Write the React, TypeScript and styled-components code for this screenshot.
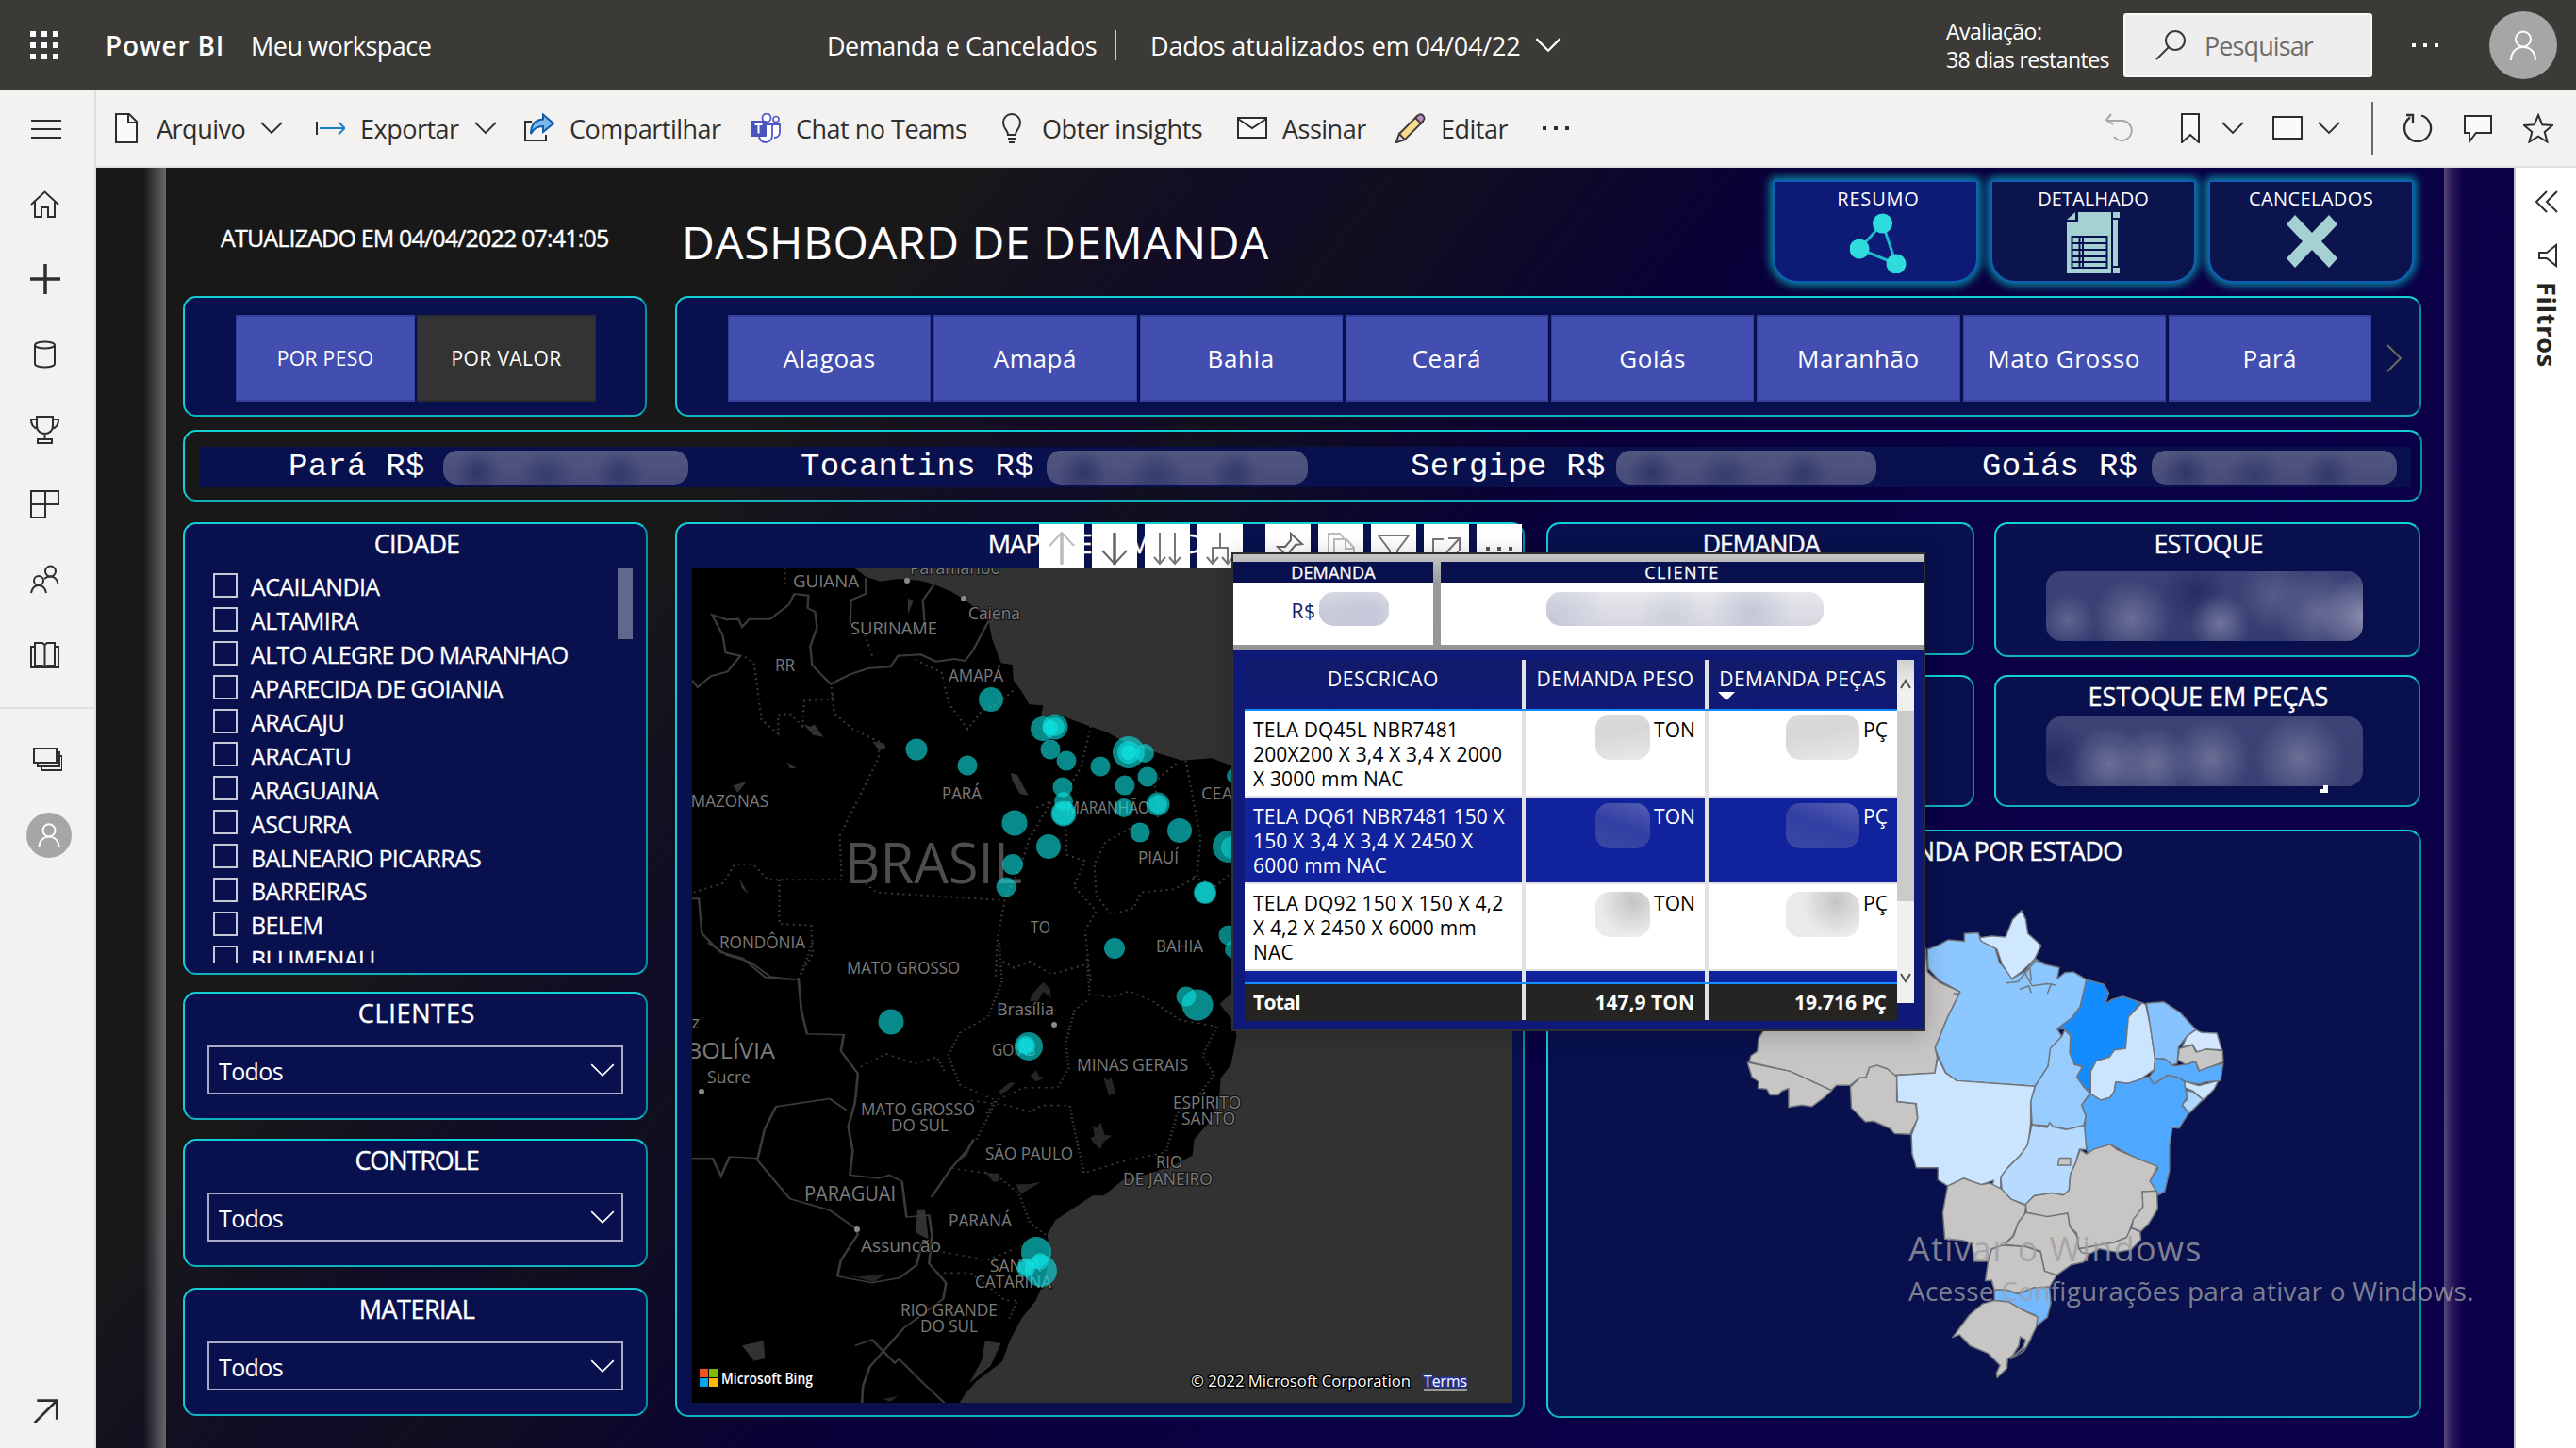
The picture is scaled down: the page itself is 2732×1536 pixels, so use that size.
import React from "react";
import styled, { createGlobalStyle, css } from "styled-components";

const Global = createGlobalStyle`
  * { box-sizing: border-box; }
  body { margin: 0; font-family: "Open Sans", "Noto Sans", sans-serif; background: #fff; }
  svg { display: block; flex: none; }
`;

const navy = "#08104e";

/* ---------- shell ---------- */
const Shell = styled.div`
  position: relative;
  width: 2732px;
  height: 1536px;
  overflow: hidden;
  display: flex;
  flex-direction: column;
`;
const TopBar = styled.header`
  height: 96px;
  flex: none;
  background: #3b3a37;
  color: #fff;
  display: flex;
  align-items: center;
  font-size: 27px;
  letter-spacing: -0.5px;
  white-space: nowrap;
`;
const Waffle = styled.div`
  width: 112px;
  padding-left: 32px;
  display: grid;
  grid-template-columns: repeat(3, 6px);
  gap: 6px;
  i { width: 6px; height: 6px; background: #fff; }
`;
const Brand = styled.div`
  width: 154px;
  font-size: 28px;
  font-weight: 600;
  letter-spacing: 0.8px;
`;
const Workspace = styled.div`width: 611px;`;
const ReportName = styled.div`width: 305px;`;
const Divider = styled.div<{ $h: number; $c: string }>`
  width: 2px;
  height: ${(p) => p.$h}px;
  background: ${(p) => p.$c};
`;
const Updated = styled.div`
  display: flex;
  align-items: center;
  gap: 15px;
  width: 880px;
  padding-left: 36px;
  letter-spacing: -0.15px;
`;
const Trial = styled.div`
  width: 188px;
  font-size: 23px;
  line-height: 30px;
  letter-spacing: -0.55px;
`;
const Search = styled.div`
  width: 264px;
  height: 68px;
  background: #eee;
  border: 2px solid #f8f8f8;
  border-radius: 3px;
  color: #6e6c6a;
  display: flex;
  align-items: center;
  padding-left: 32px;
  gap: 20px;
  letter-spacing: -0.9px;
`;
const Dots = styled.div<{ $c: string }>`
  display: flex;
  gap: 8px;
  i { width: 4px; height: 4px; background: ${(p) => p.$c}; }
`;
const TopDots = styled(Dots)`width: 124px; padding-left: 42px;`;
const Avatar = styled.div<{ $s: number }>`
  width: ${(p) => p.$s}px;
  height: ${(p) => p.$s}px;
  border-radius: 50%;
  background: #a6a6a6;
  display: grid;
  place-items: center;
`;
const Body = styled.div`flex: 1; display: flex; min-height: 0;`;
const Rail = styled.nav`
  width: 102px;
  background: #f3f2f1;
  border-right: 2px solid #e1dfdd;
  display: flex;
  flex-direction: column;
  flex: none;
`;
const RailCell = styled.div<{ $last?: boolean }>`
  height: 79.7px;
  display: flex;
  align-items: center;
  padding-left: ${(p) => (p.$last ? 28 : 32)}px;
`;
const RailGroup = styled.div`padding-top: 1px; height: 656px; border-bottom: 2px solid #e1dfdd;`;
const RailSecond = styled.div`padding-top: 14px; flex: 1;`;
const RailFoot = styled.div`padding: 0 0 25px 34px;`;
const Right = styled.div`flex: 1; display: flex; flex-direction: column; min-width: 0;`;
const ToolBar = styled.div`
  height: 82px;
  background: #f3f2f1;
  border-bottom: 2px solid #e1dfdd;
  display: flex;
  align-items: center;
  padding-left: 16px;
  color: #2f2e2c;
  flex: none;
`;
const ToolItem = styled.div<{ $w: number }>`
  width: ${(p) => p.$w}px;
  display: flex;
  align-items: center;
  gap: 16px;
  font-size: 27px;
  letter-spacing: -0.5px;
  white-space: nowrap;
  flex: none;
`;
const IconItem = styled.div<{ $w: number }>`
  width: ${(p) => p.$w}px;
  display: flex;
  align-items: center;
  gap: 16px;
  flex: none;
`;
const Stage = styled.div`flex: 1; display: flex; min-height: 0;`;
const Canvas = styled.main`
  width: 2564px;
  flex: none;
  padding-left: 74px;
  display: flex;
  background:
    linear-gradient(90deg, transparent 50px, #67676a 74px, transparent 74px, transparent 2490px, #57487a 2490px, #2a1a5c 2498px, transparent 2510px),
    linear-gradient(128deg, #181818 0%, #181818 25%, #120d24 33%, #110b28 36%, #11101e 38%, #0d082a 44%, #090038 50%, #0a0046 65%, #0b004a 100%);
`;
const Report = styled.div`
  width: 2416px;
  padding: 0 24px 0 18px;
  display: flex;
  flex-direction: column;
  color: #fff;
`;
const FilterPane = styled.aside`
  flex: 1;
  background: #fff;
  border-left: 2px solid #c8c6c4;
  display: flex;
  flex-direction: column;
  align-items: center;
  padding: 24px 0 0 2px;
`;
const FilterLabel = styled.div`
  writing-mode: vertical-rl;
  font-weight: 700;
  font-size: 27px;
  line-height: 30px;
  letter-spacing: 0.8px;
  color: #252423;
  margin-top: 15px;
`;

/* ---------- report header ---------- */
const HeaderRow = styled.div`height: 136px; display: flex; flex: none;`;
const Stamp = styled.div`
  width: 529px;
  padding: 57px 0 0 40px;
  font-size: 25px;
  line-height: 34px;
  letter-spacing: -0.83px;
  -webkit-text-stroke: 0.4px #fff;
  white-space: nowrap;
`;
const Title = styled.h1`
  margin: 0;
  padding-top: 49px;
  font-weight: 400;
  font-size: 48px;
  line-height: 60px;
  letter-spacing: 0.5px;
  flex: 1;
  white-space: nowrap;
`;
const Tabs = styled.div`display: flex; gap: 13px; padding: 13px 8px 0 0;`;
const Tab = styled.div<{ $on?: boolean }>`
  width: 218px;
  height: 109px;
  border: 2px solid #0e5fb4;
  border-radius: 3px 3px 26px 26px;
  background: ${(p) => (p.$on ? "#0d1b77" : "#0c144e")};
  box-shadow: 0 0 10px 3px #0a8ea6;
  display: flex;
  flex-direction: column;
  align-items: center;
  padding-left: ${(p) => (p.$on ? 6 : 0)}px;
`;
const TabLabel = styled.div<{ $ls: number }>`
  font-size: 20px;
  line-height: 36px;
  height: 31px;
  letter-spacing: ${(p) => p.$ls}px;
`;

/* ---------- panels ---------- */
const Panel = styled.section<{ $w: number; $h: number; $clear?: boolean }>`
  width: ${(p) => p.$w}px;
  height: ${(p) => p.$h}px;
  flex: none;
  border: 2px solid #10cfd6;
  border-right-color: #0b8f9d;
  border-bottom-color: #0fb3be;
  border-radius: 14px;
  background: ${(p) => (p.$clear ? "transparent" : navy)};
  display: flex;
  flex-direction: column;
`;
const PanelTitle = styled.h2<{ $ls?: number; $pad?: number }>`
  margin: 0;
  padding-left: ${(p) => p.$pad ?? 1}px;
  height: 39px;
  font-weight: 400;
  font-size: 27px;
  line-height: 41px;
  letter-spacing: ${(p) => p.$ls ?? 0}px;
  text-align: center;
  -webkit-text-stroke: 0.4px #fff;
  white-space: nowrap;
`;
const FilterRow = styled.div`display: flex; gap: 30px; flex: none;`;
const Segments = styled.div<{ $wide?: boolean }>`
  display: grid;
  grid-template-columns: repeat(${(p) => (p.$wide ? 8 : 2)}, 1fr);
  gap: ${(p) => (p.$wide ? 3 : 2)}px;
  width: ${(p) => (p.$wide ? 1743 : 382)}px;
  height: 92px;
  margin: 18px 0 0 54px;
`;
const Segment = styled.div<{ $fs: number; $dark?: boolean; $ls?: number }>`
  display: grid;
  place-items: center;
  font-size: ${(p) => p.$fs}px;
  letter-spacing: ${(p) => p.$ls ?? 0.4}px;
  background: ${(p) => (p.$dark ? "#333" : "#424eb0")};
  border: 2px solid ${(p) => (p.$dark ? "#2b2b2b" : "#343f9a")};
  border-width: 2px 1px;
`;
const SegmentRow = styled.div`display: flex; gap: 16px; align-items: flex-start; svg { margin-top: 49px; }`;
const Ticker = styled.div`
  margin: 16px 10px 0 16px;
  height: 43px;
  background: ${navy};
  display: flex;
  align-items: center;
  font-family: "Liberation Mono", monospace;
  font-size: 34px;
  letter-spacing: 0.25px;
  white-space: nowrap;
`;
const TickerItem = styled.div<{ $w: number; $pad: number }>`
  width: ${(p) => p.$w}px;
  padding-left: ${(p) => p.$pad}px;
  display: flex;
  align-items: center;
  justify-content: space-between;
  line-height: 45px;
`;
const Redacted = styled.span<{ $w: number; $h: number; $tone: string; $r?: number; $mt?: number }>`
  position: relative;
  display: block;
  flex: none;
  width: ${(p) => p.$w}px;
  height: ${(p) => p.$h}px;
  margin-top: ${(p) => p.$mt ?? 0}px;
  border-radius: ${(p) => p.$r ?? 15}px;
  ${(p) =>
    p.$tone === "navy" &&
    css`background:
      radial-gradient(circle at 14% 65%, rgba(46, 52, 103, 0.9), transparent 26px),
      radial-gradient(circle at 42% 75%, rgba(50, 56, 106, 0.8), transparent 30px),
      radial-gradient(circle at 72% 70%, rgba(48, 54, 105, 0.9), transparent 26px),
      linear-gradient(#525781, #454a78);`}
  ${(p) =>
    p.$tone === "light" &&
    css`background:
      radial-gradient(circle at 74% 65%, rgba(193, 196, 214, 0.9), transparent 44px),
      radial-gradient(circle at 2% 80%, rgba(193, 196, 214, 0.8), transparent 60px),
      radial-gradient(circle at 45% 75%, rgba(200, 202, 217, 0.7), transparent 36px),
      linear-gradient(#e6e7ec, #d6d7e0);`}
  ${(p) => p.$tone === "gray" && css`background: linear-gradient(170deg, #dadada, #d7d7d7 40%, #e9e9e9);`}
  ${(p) => p.$tone === "spot" && css`background: radial-gradient(circle at 68% 22%, #c4c4c4, #ebebeb 36px);`}
  ${(p) => p.$tone === "blue" && css`background: linear-gradient(20deg, #3b48a4 0%, #333fa2 50%, #545fb3 100%);`}
  ${(p) =>
    p.$tone === "kpi1" &&
    css`background:
      radial-gradient(circle at 100% 65%, #8c8fb0, transparent 44px),
      radial-gradient(circle at 7% 70%, #5e648e, transparent 30px),
      radial-gradient(circle at 27% 68%, #6a6f96, transparent 42px),
      radial-gradient(circle at 55% 75%, #6f749a, transparent 32px),
      radial-gradient(circle at 72% 35%, #565c88, transparent 40px),
      radial-gradient(circle at 86% 60%, #666b94, transparent 46px),
      radial-gradient(circle at 47% 30%, #272e65, transparent 36px),
      linear-gradient(#3c4276, #363c70);`}
  ${(p) =>
    p.$tone === "kpi2" &&
    css`background:
      radial-gradient(circle at 20% 68%, #6a6f96, transparent 40px),
      radial-gradient(circle at 34% 68%, #6a6f96, transparent 40px),
      radial-gradient(circle at 52% 60%, #6a6f96, transparent 42px),
      radial-gradient(circle at 80% 60%, #6a6f96, transparent 48px),
      radial-gradient(circle at 2% 60%, #262c62, transparent 40px),
      linear-gradient(#3d4375, #3a4073);`}
`;
const Cedilla = styled.i`
  position: absolute;
  left: 290px;
  top: 73px;
  width: 9px;
  height: 8px;
  border-right: 5px solid #fff;
  border-bottom: 4px solid #fff;
`;
const Main = styled.div`display: flex; margin-top: 22px;`;
const Col = styled.div<{ $ml?: number }>`
  display: flex;
  flex-direction: column;
  margin-left: ${(p) => p.$ml ?? 0}px;
  position: relative;
`;
const Spacer = styled.div<{ $h: number }>`height: ${(p) => p.$h}px; flex: none;`;
const KpiRow = styled.div`display: flex; gap: 21px;`;
const KpiPanel = styled(Panel)`align-items: center; padding-right: 6px;`;

/* ---------- slicers ---------- */
const ListWrap = styled.div`display: flex; height: 419px; margin: 7px 0 0 30px; overflow: hidden;`;
const List = styled.div`width: 429px; padding-top: 1px;`;
const Row = styled.div`
  height: 35.9px;
  display: flex;
  align-items: center;
  gap: 14px;
  font-size: 25px;
  line-height: 38px;
  letter-spacing: -0.65px;
  white-space: nowrap;
  -webkit-text-stroke: 0.3px #fff;
`;
const RowLabel = styled.span`padding-top: 3px;`;
const Box = styled.i`width: 26px; height: 26px; border: 2px solid #c6c8d4; flex: none;`;
const Thumb = styled.div`width: 16px; height: 76px; background: #62678d;`;
const Dropdown = styled.div`
  margin: 16px 0 0 24px;
  width: 441px;
  height: 52px;
  border: 2px solid #a9acc8;
  display: flex;
  align-items: center;
  justify-content: space-between;
  padding: 1px 7px 0 10px;
  font-size: 25px;
  letter-spacing: -0.6px;
`;

/* ---------- floating parts ---------- */
const VisualTools = styled.div`
  position: absolute;
  left: 386px;
  top: 2px;
  display: flex;
  gap: 8px;
`;
const VisualTool = styled.div<{ $gapBefore?: boolean }>`
  width: 48px;
  height: 46px;
  margin-left: ${(p) => (p.$gapBefore ? 16 : 0)}px;
  background: #fff;
  display: flex;
  align-items: center;
  justify-content: center;
  padding-top: 6px;
`;
const MapBox = styled.div`margin: 7px 0 0 16px;`;
const Tip = styled.div`
  position: absolute;
  left: 1306px;
  top: 586px;
  width: 736px;
  height: 508px;
  border: 2px solid #2f2f2f;
  background: #0f1a78;
  color: #fff;
  box-shadow: 0 4px 24px rgba(0, 0, 0, 0.22);
`;
const TipHead = styled.div`
  height: 102px;
  padding: 8px 0 6px;
  display: flex;
  gap: 8px;
  background: linear-gradient(#c6c6c6, #999 30%, #959595);
`;
const TipCard = styled.div<{ $w: number }>`width: ${(p) => p.$w}px; background: #fff;`;
const TipCardTitle = styled.div<{ $ls: number }>`
  height: 22px;
  line-height: 22px;
  background: ${navy};
  text-align: center;
  font-size: 18px;
  letter-spacing: ${(p) => p.$ls}px;
  -webkit-text-stroke: 0.3px #fff;
`;
const TipValue = styled.div<{ $pad: number }>`
  display: flex;
  justify-content: center;
  gap: 4px;
  margin-top: 10px;
  padding-left: ${(p) => p.$pad}px;
  color: #101a60;
  font-size: 21px;
  line-height: 40px;
  letter-spacing: 0.5px;
`;
const TipBody = styled.div`
  display: flex;
  padding: 10px 0 0 12px;
`;
const Table = styled.div`width: 692px; background: #e2e2e4;`;
const cols = css`display: grid; grid-template-columns: 294px 190px 200px; gap: 4px;`;
const THead = styled.div`
  ${cols}
  height: 54px;
  border-bottom: 2px solid #118dff;
  div { background: linear-gradient(#111b68, #101a76); padding-top: 7px; text-align: center; font-size: 21px; line-height: 26px; letter-spacing: 0.5px; white-space: nowrap; }
`;
const SortArrow = styled.i`
  display: block;
  margin: 1px 0 0 10px;
  width: 0;
  border: 9px solid transparent;
  border-top-color: #fff;
  border-bottom: 0;
`;
const TRow = styled.div<{ $blue?: boolean; $h: number }>`
  ${cols}
  height: ${(p) => p.$h}px;
  margin-bottom: ${(p) => (p.$h > 40 ? 2 : 0)}px;
  color: ${(p) => (p.$blue ? "#fff" : "#000")};
  > div { background: ${(p) => (p.$blue ? "#11239c" : "#fff")}; }
`;
const Desc = styled.div`
  padding: 7px 0 0 9px;
  font-size: 21px;
  line-height: 26px;
  letter-spacing: 0.15px;
  white-space: pre;
`;
const Num = styled.div`
  display: flex;
  justify-content: flex-end;
  gap: 4px;
  padding-right: 10px;
  font-size: 21px;
  line-height: 40px;
  letter-spacing: 0.1px;
`;
const TotalRow = styled.div`
  ${cols}
  height: 40px;
  border-top: 2px solid #118dff;
  font-weight: 700;
  font-size: 21px;
  line-height: 39px;
  > div { background: #252423; padding: 0 11px 0 9px; text-align: right; }
  > div:first-child { text-align: left; letter-spacing: -0.7px; }
`;
const Scroll = styled.div`
  width: 18px;
  height: 364px;
  background: linear-gradient(#d0d0d0, #f0f0f0 30px);
  display: flex;
  flex-direction: column;
  align-items: center;
`;
const ScrollArrow = styled.div<{ $h: number; $pt: number }>`
  height: ${(p) => p.$h}px;
  padding-top: ${(p) => p.$pt}px;
`;
const ScrollThumb = styled.div`width: 18px; height: 202px; background: #cbcbcb;`;
const Watermark = styled.div`
  position: absolute;
  left: 2024px;
  top: 1300px;
  color: rgba(158, 158, 162, 0.8);
  white-space: nowrap;
  font-size: 28px;
  line-height: 38px;
  letter-spacing: 0.25px;
`;
const WatermarkTitle = styled.div`font-size: 36px; line-height: 50px; letter-spacing: 1.3px;`;

/* ---------- icons ---------- */
type IconProps = { w?: number; h?: number; vb?: string; c?: string; sw?: number; children: React.ReactNode };
const Icon = ({ w = 32, h = 32, vb = "0 0 32 32", c = "#2f2e2c", sw = 2, children }: IconProps) => (
  <svg width={w} height={h} viewBox={vb} fill="none" stroke={c} strokeWidth={sw}>
    {children}
  </svg>
);
const Chevron = ({ w = 24, c = "#2f2e2c", sw = 1.8 }: { w?: number; c?: string; sw?: number }) => (
  <Icon w={w} h={w / 2 + 2} vb="0 0 24 14" c={c} sw={sw}><path d="M1 1l11 11L23 1" /></Icon>
);
const Person = ({ s, sw = 2 }: { s: number; sw?: number }) => (
  <Icon w={s} h={s} c="#fff" sw={sw}><circle cx="16" cy="9.5" r="8" /><path d="M3 32c0-8 5-14 13-14s13 6 13 14" /></Icon>
);

const railIcons = [
  <Icon key="menu" w={34} vb="1 0 34 32"><path d="M2 7h32M2 16h32M2 25h32" /></Icon>,
  <Icon key="home"><path d="M1 16L15.5 2.5 30 16M5 13v16h7V19h7v10h7V13" /></Icon>,
  <Icon key="plus" sw={3.5}><path d="M16 0v32M0 16h32" /></Icon>,
  <Icon key="data"><path d="M5 6v20c0 2 5 3.5 10.5 3.5S26 28 26 26V6" /><ellipse cx="15.5" cy="6" rx="10.5" ry="3.5" /></Icon>,
  <Icon key="cup"><path d="M7 2h17v10c0 5-4 8-8.5 8S7 17 7 12zM7 5H1c0 6 2 9 7 9.5M24 5h6c0 6-2 9-7 9.5M15.5 20v5M8 30v-4h15v4z" /></Icon>,
  <Icon key="apps"><path d="M1 2h29v14H1zM1 16v14h15V2" /></Icon>,
  <Icon key="people"><circle cx="21.5" cy="7" r="5.5" /><circle cx="9" cy="17" r="5" /><path d="M1 30c1-5 4-8 8-8s7 3 8 8M15 15c2-2 4-2.5 6.5-2.5 4 0 7 3 8 8" /></Icon>,
  <Icon key="book"><path d="M5 3h8l2.5 2L18 3h8v24H18l-2.5 1.5L13 27H5zM15.5 5v23M5 7H1v22h29V7h-4" /></Icon>,
];

const FileIcon = () => <Icon><path fill="#fafafa" d="M5 1h14l8 8v22H5zM18 1v9h9" /></Icon>;
const ExportIcon = () => <Icon><path d="M2 9v14" /><path stroke="#1a7fc4" d="M5 16h26M25 9.5L31.5 16 25 22.5" /></Icon>;
const ShareIcon = () => (
  <Icon><path d="M8 9H1v20h22v-6" /><path fill="#7db8ea" stroke="#0f5fa8" d="M20 1.5L31 11 20 20v-6c-6 0-10 2-13 8 0-10 5-15 13-15.5z" /></Icon>
);
const TeamsIcon = () => (
  <svg width="32" height="32" viewBox="0 0 32 32">
    <circle cx="17" cy="5" r="4.500" fill="#fff" stroke="#5059c9" strokeWidth="1.800" />
    <circle cx="27" cy="6.500" r="3" fill="#fff" stroke="#5059c9" strokeWidth="1.600" />
    <path d="M22 12h9v8c0 4-3 6-6 6M10 12h13v11c0 5-3 8-7 8s-7-3-7-7" fill="#fff" stroke="#5059c9" strokeWidth="1.800" />
    <rect x="0" y="8" width="17" height="17" rx="1" fill="#4b53bc" />
    <path d="M4.500 12h8M8.500 12v9.500" stroke="#fff" strokeWidth="2" />
  </svg>
);
const BulbIcon = () => <Icon><path d="M12 23c0-5-5-6-5-13a9 9 0 0 1 18 0c0 7-5 8-5 13zM12 27h8M13 31h6" /></Icon>;
const MailIcon = () => <Icon><path fill="#fafafa" d="M1 5h30v21H1z" /><path d="M1 6l15 10L31 6" /></Icon>;
const PencilIcon = () => (
  <svg width="32" height="32" viewBox="0 0 32 32" strokeWidth="1.800">
    <path d="M4 22L23 3l6 6-19 19-9 3z" fill="#f9d98a" stroke="#3b3a39" />
    <path d="M21 5l4-3.500c3-1 6 2 5.500 5L27 11z" fill="#b98bc9" stroke="#3b3a39" />
    <path d="M4 22l6 6-9 3z" fill="#ddd" stroke="#3b3a39" />
  </svg>
);

/* ---------- Bing map, drawn in page coordinates ---------- */
const north = "translate(700 540) scale(.39541 .33333)";
const south = "translate(700 1000) scale(.59949 .34183)";
const bubbles: [number, number, number, number?][] = [
  [1051, 742, 13], [1106, 773, 13], [1119, 771, 13.5], [1119, 771, 10], [1114, 772, 8, 0.7], [1114, 795, 10.5], [1131, 807, 10.5],
  [972, 795, 11.5], [1026, 812, 10.5], [1167, 813, 10.5], [1197, 798, 17], [1197, 798, 12], [1197, 798, 8, 0.8],
  [1214, 799, 10], [1217, 824, 10.5], [1193, 833, 10.5], [1192, 857, 10], [1228, 853, 12.5], [1228, 853, 10], [1251, 881, 13],
  [1209, 883, 10.5], [1127, 835, 10.5], [1128, 850, 10], [1128, 863, 13.5], [1128, 863, 12], [1076, 873, 13.5],
  [1112, 898, 13], [1074, 917, 11], [1067, 941, 10.5], [1303, 898, 17], [1307, 899, 12], [1278, 947, 12], [1278, 947, 11],
  [1303, 992, 10.5], [1309, 1007, 10], [1182, 1006, 11], [1309, 823, 8], [945, 1084, 13.5], [1091, 1110, 15],
  [1088, 1109, 10], [1088, 1109, 8], [1258, 1057, 10.5], [1270, 1066, 16.5], [1099, 1328, 16], [1104, 1348, 17],
  [1088, 1345, 10], [1088, 1345, 8], [1103, 1338, 9],
];
const labels: [string, number, number, number, number?][] = [
  ["Paramaribo", 965, 609, 96, 19], ["GUIANA", 841, 623, 70], ["SURINAME", 902, 673, 92], ["Caiena", 1027, 657, 55, 19],
  ["RR", 822, 712, 21], ["AMAPÁ", 1006, 723, 58], ["PARÁ", 999, 848, 42], ["AMAZONAS", 722, 856, 93], ["MARANHÃO", 1131, 863, 88],
  ["CEARÁ", 1274, 848, 56], ["PIAUÍ", 1207, 916, 43], ["RONDÔNIA", 763, 1006, 91], ["MATO GROSSO", 898, 1033, 120],
  ["TO", 1093, 990, 21], ["BAHIA", 1226, 1010, 50], ["Brasília", 1057, 1077, 61, 18], ["GOIÁS", 1052, 1120, 46],
  ["MINAS GERAIS", 1142, 1136, 118], ["BOLÍVIA", 728, 1123, 94, 24], ["Sucre", 750, 1149, 46, 18], ["La Paz", 688, 1091, 54, 18],
  ["ESPÍRITO", 1244, 1176, 72], ["SANTO", 1253, 1193, 57], ["MATO GROSSO", 913, 1183, 121], ["DO SUL", 945, 1200, 61],
  ["SÃO PAULO", 1045, 1230, 93], ["RIO", 1226, 1239, 28], ["DE JANEIRO", 1191, 1257, 95], ["PARAGUAI", 853, 1274, 97, 21],
  ["PARANÁ", 1006, 1301, 67], ["Assuncão", 913, 1328, 85, 19], ["SANTA", 1050, 1349, 54], ["CATARINA", 1034, 1366, 81],
  ["RIO GRANDE", 955, 1396, 103], ["DO SUL", 976, 1413, 61],
];
const BingMap = () => (
  <svg width="870" height="886" viewBox="734 602 870 886" fontFamily="Open Sans, sans-serif">
    <rect x="734" y="602" width="870" height="886" fill="#000" />
    <g fill="#323232">
      <path transform={north} d="M520 186L552 215 590 230 640 222 700 228 735 240 780 262 820 290 860 330 882 360 890 410 905 460 915 490 945 495 948 545 970 580 990 622 1028 625 1022 658 1075 655 1100 668 1150 690 1200 710 1250 745 1330 775 1400 800 1480 793 1540 820V186z" />
      <path transform={south} d="M1040 120L1012 155 990 190 1015 245 1020 290 1010 380 992 420 990 470 970 560 945 610 942 660 910 690 860 720 820 735 785 785 765 785 735 820 700 860 685 905 690 960 680 1050 665 1110 640 1165 620 1230 605 1300 560 1360 540 1400 530 1428H1508V120z" />
      <path transform={north} d="M385 685l20 8 8-8 26 40-28-6zM570 740l30 5 6 14-18 10zM940 840l18 5 30 66-22-4-20-40zM340 805l26 20-18 0zM665 285l15 5-15 45zM195 880l38-14-24 36zM213 1175l24 50-18-20z" />
      <path transform={south} d="M145 1250l38-15 3 55-20 8zM575 1235l28 8-18 70-38 54 22-70zM455 830l14 0 6 90-22-20z" />
    </g>
    <g fill="#262626">
      <path transform={south} d="M658 160l20-38 12 20 2 30-14-20-10 30-14 0zM784 415l8 12 6-10 8 50-12 8zM765 565l8 10 6-18 8 40 12 2-14 20-6 22-12-20-6-14 8-8zM600 460l20-28 8 4-14 24-12 10zM655 415l10-20 6 20 10 4-16 12zM572 705l14 14 14-6 0 26-10 4zM630 750l20 0 25-8-20 20-16 18-6-14zM320 1025l30 12 50-10-22 26zM548 630l8-30-12 60-24 30zM395 1415l26-8-14 18z" />
    </g>
    <rect x="1290" y="602" width="30" height="200" fill="#323232" />
    <g fill="none" stroke="#3a3a3a">
      <g transform={north} strokeWidth="6">
        <path d="M86 545l15 22 35-35 45-15 35-50-40-10-8-55-28-65 40 15 30-2 10 25 20-25h55l50-45 15-35 38 5-2 40 20 12 5 50-18 60 5 60 50 60 50-30 50-20 60-5 20-35 62-4 40 22 50-8 28 6 20-30 40-90 30-30M552 220v50l-40 20-2 80M735 240l-30 50 5 80M86 1240h18l8 110 50 60 60 20 60 60 80 8" />
        <path strokeDasharray="5 11" d="M335 186v60M228 470l24 20 20 180 45 45 0-60 30-5 35 40 5-80 75-5-3-50M462 590l5 60 50 50 70 40 0 50-105 250 5 140H320M550 400l20 70M685 480l70 40 20 100 50 80 40-60 40-20 50-50M1155 690l-25 130-30 60M1385 810l-60 60 10 60 0 60M1410 800l40 250-10 120-60 40-90 10-20 50-60 20-40-60-5-100 30-70 90-60M1090 1020v80l50 20-30 80 60 80-30 60 15 170M1010 950l40-20-60 120-20 80-45 110-20 130-5 120M540 1180l40 40 340 25M320 1180v140l85 5 5 90-40 80M90 1220l80-30 30-60h50l40 50h40M920 1440l30 20 40-20 60 40 90-30M1430 1170l60 30 50-50" />
      </g>
      <g transform={south} strokeWidth="4.500">
        <path d="M85 0l35 40 40 20 35 45 50 10 5 95 10 73 65 3-5 50 30 70-5 90-12 75 8 75-5 75 50 10 20-10 22 20 8 110 40-5 5 60-5 90 30 60-5 50-70 90-60 120-12 60-6 172M330 520l-30-36-95 25-20 70-12 90-50-5-15 60-15-55H57M170 670l60 125 70 35 45 55 5 20-30 80-6 50 60 20 50-15 30-40 10-70M345 1250l30-18 40 72 8-12 40 70 40 66M555 610l-10 30-30 60-35 90" />
        <path strokeDasharray="4 8" d="M270 0l-22 105M600 0l5 120-25 110-50 50-20 70 20 90 65 50-35 120M355 385l45-40 50 30 40-20 15 50M755 50l5 110 40 10 30-20 40 30 50 60 65 20-25 90 20 60-25 60-40 60-20 120-80 30-65 35-20-160-5-50-50 0-20 20-40-20-65-15M755 180l-22 30-15 100 5 80-20 60-60 0-50 40-15 40M515 700l80 20 40 60 20 90 30 40M500 960l80 25 60-45M490 1025l60 0 40 55 20 30h22l-15 60" />
      </g>
    </g>
    <g fill="#8a8a8a"><circle cx="962" cy="616" r="3" /><circle cx="1022" cy="635" r="3" /><circle cx="976" cy="1087" r="0" /><circle cx="1118" cy="1087" r="3" /><circle cx="744" cy="1158" r="3" /><circle cx="909" cy="1304" r="3" /></g>
    <g fill="#7b7b7b" fontWeight="500" stroke="#000" strokeWidth="2.500" paintOrder="stroke" strokeOpacity=".6">
      {labels.map(([t, x, y, w, fs = 18], i) => (
        <text key={i} x={x} y={y} fontSize={fs} textLength={w} lengthAdjust="spacingAndGlyphs">{t}</text>
      ))}
    </g>
    <text x="896" y="937" fontSize="60" textLength="188" lengthAdjust="spacingAndGlyphs" fill="#4d4d4d">BRASIL</text>
    <g fill="#0fdede">
      {bubbles.map(([x, y, r, o = 0.62], i) => <circle key={i} cx={x} cy={y} r={r} opacity={o} />)}
    </g>
    <g>
      <rect x="742" y="1452" width="9" height="9" fill="#f25022" /><rect x="752" y="1452" width="9" height="9" fill="#7fba00" />
      <rect x="742" y="1462" width="9" height="9" fill="#00a4ef" /><rect x="752" y="1462" width="9" height="9" fill="#ffb900" />
      <text x="765" y="1468" fontSize="17" fontWeight="600" textLength="97" lengthAdjust="spacingAndGlyphs" fill="#fff">Microsoft Bing</text>
    </g>
    <g fontSize="17" fill="#fff" stroke="#000" strokeWidth="3" paintOrder="stroke">
      <text x="1263" y="1471" textLength="233" lengthAdjust="spacingAndGlyphs">© 2022 Microsoft Corporation</text>
      <text x="1510" y="1471" textLength="46" lengthAdjust="spacingAndGlyphs" stroke="#24349c">Terms</text>
    </g>
    <path d="M1510 1474.500h46" stroke="#fff" strokeWidth="2" />
  </svg>
);

/* ---------- choropleth ---------- */
const gray = "#c8c6c4";
const states: [string, string][] = [
  [gray, "M600 232L606 300 640 330 700 357 664 430 628 518 634 545 627 590 512 596 490 578 462 568 440 574 430 602 412 604 385 625 345 625 330 640 212 585 95 558 100 540 118 528 122 490 135 470 200 320 420 240z"],
  [gray, "M90 560L212 585 332 640 310 660 275 686 245 682 208 688V634L188 642 178 653H155L145 636 120 634 122 615 103 602z"],
  [gray, "M385 630L412 604 430 602 440 574 462 568 490 578 512 596 518 600V672L572 678 578 720 556 766 512 764 500 750 452 728 428 730 388 690z"],
  ["#8dc7ff", "M606 236L636 224 666 208 712 212V190L752 188 760 210 800 230 812 272 850 318 884 300 915 262 940 278 984 288 978 320 1000 302 1024 300 1062 322 1044 400 1020 432 978 464 992 486 960 520 952 570 914 628 690 612 658 588 636 540 628 518 664 430 700 357 640 325 608 290z"],
  ["#cfe7ff", "M755 202L790 197 830 200 850 150 876 124 888 150 894 190 932 224 914 262 880 296 848 320 820 278 805 235 760 212z"],
  ["#128cff", "M1062 322L1112 336 1126 360 1116 392 1134 380 1166 370 1218 388 1182 430 1174 520 1142 524 1128 544 1090 556 1074 586V644L1052 628 1034 600 1050 570 1026 564 1014 534 1016 480 998 464 978 464 1020 432 1044 400z"],
  ["#cbe5ff", "M1222 388L1232 394 1244 450 1260 550 1256 580 1214 610 1180 620 1146 616 1142 642 1130 660 1100 668 1074 650 1074 586 1090 556 1128 544 1142 524 1174 520 1182 430z"],
  ["#86c2ff", "M1234 390L1284 386 1330 416 1376 466 1350 484 1326 516 1322 562 1306 568 1288 550 1258 548 1244 450z"],
  ["#d3e8ff", "M1376 466L1392 474 1436 476 1450 524 1404 522 1380 532 1366 508 1336 516 1350 484z"],
  [gray, "M1328 520L1366 510 1376 530 1404 522 1452 526 1454 558 1418 572 1386 584 1374 556 1346 566 1324 552z"],
  ["#57adff", "M1258 548L1288 550 1312 570 1346 566 1374 558 1384 584 1418 572 1454 562 1446 612 1404 616 1384 622 1344 614 1324 602 1294 596 1254 622 1242 602 1256 582z"],
  ["#cbe5ff", "M1344 614L1384 626 1440 612 1428 636 1398 668 1368 642 1342 632z"],
  ["#b0d8ff", "M1348 640L1368 644 1396 666 1356 706 1336 680 1350 666z"],
  ["#4ea8ff", "M1146 616L1180 620 1240 600 1256 622 1296 596 1324 602 1342 614 1350 660 1336 682 1354 706 1328 748 1308 746 1300 800 1300 870 1286 930 1268 940 1242 902 1268 862 1216 840 1170 816 1130 794 1066 822 1056 770 1060 712 1048 680 1074 650 1104 668 1130 660 1142 642z"],
  ["#98ccff", "M992 484L1000 466 1016 484 1014 534 1028 566 1050 572 1034 602 1056 632 1072 648 1048 682 1060 714 1054 740 1010 752 960 742 906 738 902 670 916 626 952 570 958 520z"],
  ["#cbe5ff", "M518 596L627 590 636 546 658 590 690 612 914 628 902 672V736L894 800 872 826 836 862 816 890V920L790 918 796 898 760 910 710 892 664 914 636 896V862H574L562 822 560 768 578 720 574 678 520 672z"],
  ["#b7dbff", "M906 738L950 746 956 732 966 744 1004 752 1056 740 1062 810 1042 808 1030 850 1016 880 1012 926 996 940 964 934 912 942 888 968 846 952 820 928 816 888 836 862 872 826 892 798z"],
  [gray, "M1062 822L1084 808 1130 794 1150 810 1216 838 1266 858 1244 900 1268 938 1222 930 1226 970 1194 1016 1180 1060 1140 1076 1040 1094 1034 1050 1014 1030 1008 992 950 1002 890 990 888 966 912 942 964 934 996 940 1012 926 1016 880 1030 850 1044 810z"],
  [gray, "M664 914L710 892 760 910 786 906 818 922 846 952 888 970 886 992 866 1020 852 1056 826 1082 790 1094 778 1130H740L734 1078 706 1070 656 1066 650 990z"],
  [gray, "M888 990L950 1002 1008 992 1014 1030 1034 1056 1040 1094 1072 1104 1054 1132 1018 1140 976 1170 942 1158 930 1100 890 1088 828 1082 854 1056 866 1020z"],
  [gray, "M820 1084L890 1088 930 1104 942 1158 976 1170 956 1204 910 1206 866 1222 832 1212 798 1212 790 1184 772 1186 780 1130 790 1096z"],
  ["#73b9ff", "M798 1212L832 1212 866 1224 910 1206 956 1204 960 1250 950 1290 920 1314 918 1286 880 1270 838 1246 798 1242z"],
  [gray, "M798 1242L838 1246 880 1270 922 1290 918 1318 890 1376 836 1410 834 1436 806 1464 804 1450 814 1428 780 1394 728 1372 698 1340 678 1348 726 1284 764 1252z"],
  [gray, "M1222 930L1264 928 1266 980 1240 1022 1218 1044 1192 1034 1196 1010 1224 974z"],
  [gray, "M1040 1094L1140 1076 1176 1062 1190 1034 1216 1046 1218 1068 1190 1096 1150 1104 1100 1094 1072 1108 1050 1106z"],
  [gray, "M984 834h32v20h-36z"],
];
const StateMap = () => (
  <svg width="924" height="580" viewBox="1642 921 924 580">
    <g transform="translate(1820 920) scale(.36990)" stroke="#71767c" strokeWidth="4" strokeLinejoin="round">
      {states.map(([f, d], i) => <path key={i} fill={f} d={d} />)}
      <path fill="none" d="M832 332l34-4 50-60 26 6M884 300l22 40 44-6 24 4M870 350l26-10 8 20M900 290l4 36M950 362l12-30M680 362l14 0-2 12" />
      <path fill={navy} d="M872 1346l16 10-8 20-36 34 24-38z" />
      <path fill="none" d="M904 1350l-22 38-36 20" />
    </g>
  </svg>
);

/* ---------- content ---------- */
const ufs = ["Alagoas", "Amapá", "Bahia", "Ceará", "Goiás", "Maranhão", "Mato Grosso", "Pará"];
const cities = ["ACAILANDIA", "ALTAMIRA", "ALTO ALEGRE DO MARANHAO", "APARECIDA DE GOIANIA", "ARACAJU", "ARACATU", "ARAGUAINA", "ASCURRA", "BALNEARIO PICARRAS", "BARREIRAS", "BELEM", "BLUMENAU"];
const rows = [
  "TELA DQ45L NBR7481\n200X200 X 3,4 X 3,4 X 2000\nX 3000 mm NAC",
  "TELA DQ61 NBR7481 150 X\n150 X 3,4 X 3,4 X 2450 X\n6000 mm NAC",
  "TELA DQ92 150 X 150 X 4,2\nX 4,2 X 2450 X 6000 mm\nNAC",
];
const tones = ["gray", "blue", "spot"];

const Slicer = ({ title, ls }: { title: string; ls: number }) => (
  <Panel $w={493} $h={136}>
    <PanelTitle $ls={ls} $pad={3}>{title}</PanelTitle>
    <Dropdown>Todos<Chevron w={26} c="#fff" sw={1.6} /></Dropdown>
  </Panel>
);

const ToolGlyph = ({ c = "#777", children }: { c?: string; children: React.ReactNode }) => (
  <Icon w={34} h={36} vb="0 0 34 36" c={c}>{children}</Icon>
);
const toolIcons = [
  <ToolGlyph key="u" c="#bbb"><path strokeWidth="3.500" d="M17 1v34" /><path d="M4 15L17 1l13 14" /></ToolGlyph>,
  <ToolGlyph key="d" c="#666"><path strokeWidth="3.500" d="M17 1v34" /><path d="M4 20l13 14 13-14" /></ToolGlyph>,
  <ToolGlyph key="dd"><path d="M9 1v33M25 1v33M3 27l6 7 6-7M19 27l6 7 6-7" /></ToolGlyph>,
  <ToolGlyph key="f"><path d="M17 1v16M9 34V17h16v17M3 27l6 7 6-7M19 27l6 7 6-7" /></ToolGlyph>,
  <ToolGlyph key="pin" c="#666"><path d="M20 2l12 11-7 1-6 7 0 8L6 16h8l6-7zM12 22L3 32" /></ToolGlyph>,
  <ToolGlyph key="copy" c="#bbb"><path d="M10 30H4V2h12l4 5M10 8h13l8 9v18H10zM22 8v10h9" /></ToolGlyph>,
  <ToolGlyph key="flt"><path d="M1 4h32L21 20v15h-8V20z" /></ToolGlyph>,
  <ToolGlyph key="exp"><path d="M14 8H3v24h26V20M19 7h12v13M31 7L17 22" /></ToolGlyph>,
  <Dots key="dots" $c="#555"><i /><i /><i /></Dots>,
];

export default function App() {
  return (
    <Shell>
      <Global />
      <TopBar>
        <Waffle>{Array.from({ length: 9 }, (_, i) => <i key={i} />)}</Waffle>
        <Brand>Power BI</Brand>
        <Workspace>Meu workspace</Workspace>
        <ReportName>Demanda e Cancelados</ReportName>
        <Divider $h={32} $c="#d0d0d0" />
        <Updated>Dados atualizados em 04/04/22<Chevron w={28} c="#fff" sw={2} /></Updated>
        <Trial>Avaliação:<br />38 dias restantes</Trial>
        <Search>
          <Icon c="#3b3a39"><circle cx="21" cy="11" r="10" /><path d="M14 18L1 31" /></Icon>
          Pesquisar
        </Search>
        <TopDots $c="#fff"><i /><i /><i /></TopDots>
        <Avatar $s={72}><Person s={32} /></Avatar>
      </TopBar>
      <Body>
        <Rail>
          <RailGroup>{railIcons.map((ic, i) => <RailCell key={i}>{ic}</RailCell>)}</RailGroup>
          <RailSecond>
            <RailCell><Icon w={34}><path d="M3 4h24v15H3zM27 8h3v15H7v-4M30 12h3v15H11v-4" /></Icon></RailCell>
            <RailCell $last><Avatar $s={48}><Person s={26} sw={2.4} /></Avatar></RailCell>
          </RailSecond>
          <RailFoot><Icon w={28} h={28} sw={3}><path d="M3 30L29 4M6 3h24v23" /></Icon></RailFoot>
        </Rail>
        <Right>
          <ToolBar>
            <ToolItem $w={216}><FileIcon />Arquivo<Chevron /></ToolItem>
            <ToolItem $w={222}><ExportIcon />Exportar<Chevron /></ToolItem>
            <ToolItem $w={240}><ShareIcon />Compartilhar</ToolItem>
            <ToolItem $w={261}><TeamsIcon />Chat no Teams</ToolItem>
            <ToolItem $w={255}><BulbIcon />Obter insights</ToolItem>
            <ToolItem $w={168}><MailIcon />Assinar</ToolItem>
            <ToolItem $w={156}><PencilIcon />Editar</ToolItem>
            <IconItem $w={596}><Dots $c="#2f2e2c"><i /><i /><i /></Dots></IconItem>
            <IconItem $w={76}><Icon c="#aaa8a6"><path d="M7 1L2 7l7 5M2 8h17a10.5 10.5 0 1 1-9 17" /></Icon></IconItem>
            <IconItem $w={102}><Icon><path fill="#fafafa" d="M6 1h18v30l-9-8-9 8z" /></Icon><Chevron /></IconItem>
            <IconItem $w={105}><Icon><path fill="#fafafa" d="M1 4h30v23H1z" /></Icon><Chevron /></IconItem>
            <IconItem $w={33}><Divider $h={56} $c="#6b6967" /></IconItem>
            <IconItem $w={64}><Icon sw={2.3}><path d="M20 2.5A14 14 0 1 1 8 4.500M4 2h7v8" /></Icon></IconItem>
            <IconItem $w={64}><Icon><path fill="#fafafa" d="M2 3h28v18H14l-7 9v-9H2z" /></Icon></IconItem>
            <Icon><path d="M16 2l4.200 10.200L31 13l-8.300 7L25.500 30.500 16 24.600 6.500 30.500 9.300 20 1 13l10.800-.8z" /></Icon>
          </ToolBar>
          <Stage>
            <Canvas>
              <Report>
                <HeaderRow>
                  <Stamp>ATUALIZADO EM 04/04/2022 07:41:05</Stamp>
                  <Title>DASHBOARD DE DEMANDA</Title>
                  <Tabs>
                    <Tab $on>
                      <TabLabel $ls={0.8}>RESUMO</TabLabel>
                      <svg width="60" height="66" viewBox="1962 225 60 66">
                        <path d="M1996.500 238L1972 265 2011 281z" fill="none" stroke="#1fb9cc" strokeWidth="3" />
                        <g fill="#2fdcdc"><circle cx="1996.500" cy="238" r="10.500" /><circle cx="1972" cy="265" r="10.500" /><circle cx="2011" cy="281" r="10.500" /></g>
                      </svg>
                    </Tab>
                    <Tab>
                      <TabLabel $ls={0.05}>DETALHADO</TabLabel>
                      <svg width="56" height="66" viewBox="0 0 56 66" fill="#a6d1d2">
                        <path d="M12 1h35v65H0V12h12zM0 9l9-8v8zM49 1h7v6h-7zM49 60h7v6h-7zM49 9h5v49h-5z" />
                        <g stroke={navy} strokeWidth="2"><path fill="none" d="M5.500 27h37v33h-37zM5 34h38M5 41h38M5 48h38M5 54h38M13.500 27v33M17 27v33" /></g>
                      </svg>
                    </Tab>
                    <Tab>
                      <TabLabel $ls={0.4}>CANCELADOS</TabLabel>
                      <svg width="60" height="66" viewBox="-3 0 60 66" fill="#a6d1d2">
                        <path d="M1 14L10 4 28 23 46 4l9 10-17 18 17 18-9 10-18-19-18 19-9-10 17-18z" />
                      </svg>
                    </Tab>
                  </Tabs>
                </HeaderRow>
                <FilterRow>
                  <Panel $w={492} $h={128}>
                    <Segments><Segment $fs={21}>POR PESO</Segment><Segment $fs={21} $dark>POR VALOR</Segment></Segments>
                  </Panel>
                  <Panel $w={1852} $h={128}>
                    <SegmentRow>
                      <Segments $wide>{ufs.map((u) => <Segment key={u} $fs={26} $ls={0.6}>{u}</Segment>)}</Segments>
                      <Icon w={16} h={30} vb="0 0 16 30" c="#6b6960"><path d="M1 1l14 14L1 29" /></Icon>
                    </SegmentRow>
                  </Panel>
                </FilterRow>
                <Spacer $h={14} />
                <Panel $w={2375} $h={76} $clear>
                  <Ticker>
                    <TickerItem $w={518} $pad={94}>Pará R$<Redacted $w={260} $h={36} $tone="navy" /></TickerItem>
                    <TickerItem $w={657} $pad={119}>Tocantins R$<Redacted $w={277} $h={36} $tone="navy" /></TickerItem>
                    <TickerItem $w={603} $pad={109}>Sergipe R$<Redacted $w={276} $h={36} $tone="navy" /></TickerItem>
                    <TickerItem $w={552} $pad={112}>Goiás R$<Redacted $w={260} $h={36} $tone="navy" /></TickerItem>
                  </Ticker>
                </Panel>
                <Main>
                  <Col>
                    <Panel $w={493} $h={480}>
                      <PanelTitle $ls={-0.9} $pad={3}>CIDADE</PanelTitle>
                      <ListWrap>
                        <List>{cities.map((c) => <Row key={c}><Box /><RowLabel>{c}</RowLabel></Row>)}</List>
                        <Thumb />
                      </ListWrap>
                    </Panel>
                    <Spacer $h={18} />
                    <Slicer title="CLIENTES" ls={0.7} />
                    <Spacer $h={20} />
                    <Slicer title="CONTROLE" ls={-1.1} />
                    <Spacer $h={22} />
                    <Slicer title="MATERIAL" ls={-0.5} />
                  </Col>
                  <Col $ml={29}>
                    <Panel $w={901} $h={949}>
                      <PanelTitle $ls={-0.9} $pad={5}>MAPA DE DEMANDA</PanelTitle>
                      <MapBox><BingMap /></MapBox>
                    </Panel>
                    <VisualTools>
                      {toolIcons.map((ic, i) => <VisualTool key={i} $gapBefore={i === 4}>{ic}</VisualTool>)}
                    </VisualTools>
                  </Col>
                  <Col $ml={23}>
                    <KpiRow>
                      <KpiPanel $w={454} $h={141}><PanelTitle $ls={-1.3} $pad={7}>DEMANDA</PanelTitle></KpiPanel>
                      <KpiPanel $w={452} $h={143}><PanelTitle $ls={-0.9} $pad={8}>ESTOQUE</PanelTitle><Redacted $mt={11} $w={336} $h={74} $r={16} $tone="kpi1" /></KpiPanel>
                    </KpiRow>
                    <Spacer $h={19} />
                    <KpiRow>
                      <KpiPanel $w={454} $h={140} />
                      <KpiPanel $w={452} $h={140}><PanelTitle $pad={8}>ESTOQUE EM PEÇAS</PanelTitle><Redacted $mt={3} $w={336} $h={74} $r={16} $tone="kpi2"><Cedilla /></Redacted></KpiPanel>
                    </KpiRow>
                    <Spacer $h={24} />
                    <Panel $w={928} $h={624}>
                      <PanelTitle $ls={-0.6}>DEMANDA POR ESTADO</PanelTitle>
                      <StateMap />
                    </Panel>
                  </Col>
                </Main>
              </Report>
            </Canvas>
            <FilterPane>
              <Icon w={26} h={24} vb="0 0 26 24"><path d="M13 1L2 12l11 11M24 1L13 12l11 11" /></Icon>
              <Spacer $h={32} />
              <Icon w={22} h={26} vb="-2 0 22 26"><path d="M19 2v22L9 16H1v-6h8z" /></Icon>
              <FilterLabel>Filtros</FilterLabel>
            </FilterPane>
          </Stage>
        </Right>
      </Body>

      <Tip>
        <TipHead>
          <TipCard $w={212}>
            <TipCardTitle $ls={0.1}>DEMANDA</TipCardTitle>
            <TipValue $pad={15}>R$<Redacted $w={74} $h={36} $tone="light" /></TipValue>
          </TipCard>
          <TipCard $w={512}>
            <TipCardTitle $ls={1.5}>CLIENTE</TipCardTitle>
            <TipValue $pad={6}><Redacted $w={294} $h={36} $tone="light" /></TipValue>
          </TipCard>
        </TipHead>
        <TipBody>
          <Table>
            <THead><div>DESCRICAO</div><div>DEMANDA PESO</div><div>DEMANDA PEÇAS<SortArrow /></div></THead>
            {rows.map((r, i) => (
              <TRow key={i} $h={90} $blue={i === 1}>
                <Desc>{r}</Desc>
                <Num><Redacted $w={58} $h={48} $mt={4 + i * 2} $tone={tones[i]} />TON</Num>
                <Num><Redacted $w={78} $h={48} $mt={4 + i * 2} $tone={tones[i]} />PÇ</Num>
              </TRow>
            ))}
            <TRow $h={12} $blue><div /><div /><div /></TRow>
            <TotalRow><div>Total</div><div>147,9 TON</div><div>19.716 PÇ</div></TotalRow>
          </Table>
          <Scroll>
            <ScrollArrow $h={54} $pt={19}><Icon w={12} h={12} vb="0 0 12 12" c="#505050"><path d="M1 11l5-8 5 8" /></Icon></ScrollArrow>
            <ScrollThumb />
            <ScrollArrow $h={108} $pt={76}><Icon w={12} h={12} vb="0 0 12 12" c="#505050"><path d="M1 1l5 8 5-8" /></Icon></ScrollArrow>
          </Scroll>
        </TipBody>
      </Tip>

      <Watermark>
        <WatermarkTitle>Ativar o Windows</WatermarkTitle>
        Acesse Configurações para ativar o Windows.
      </Watermark>
    </Shell>
  );
}
